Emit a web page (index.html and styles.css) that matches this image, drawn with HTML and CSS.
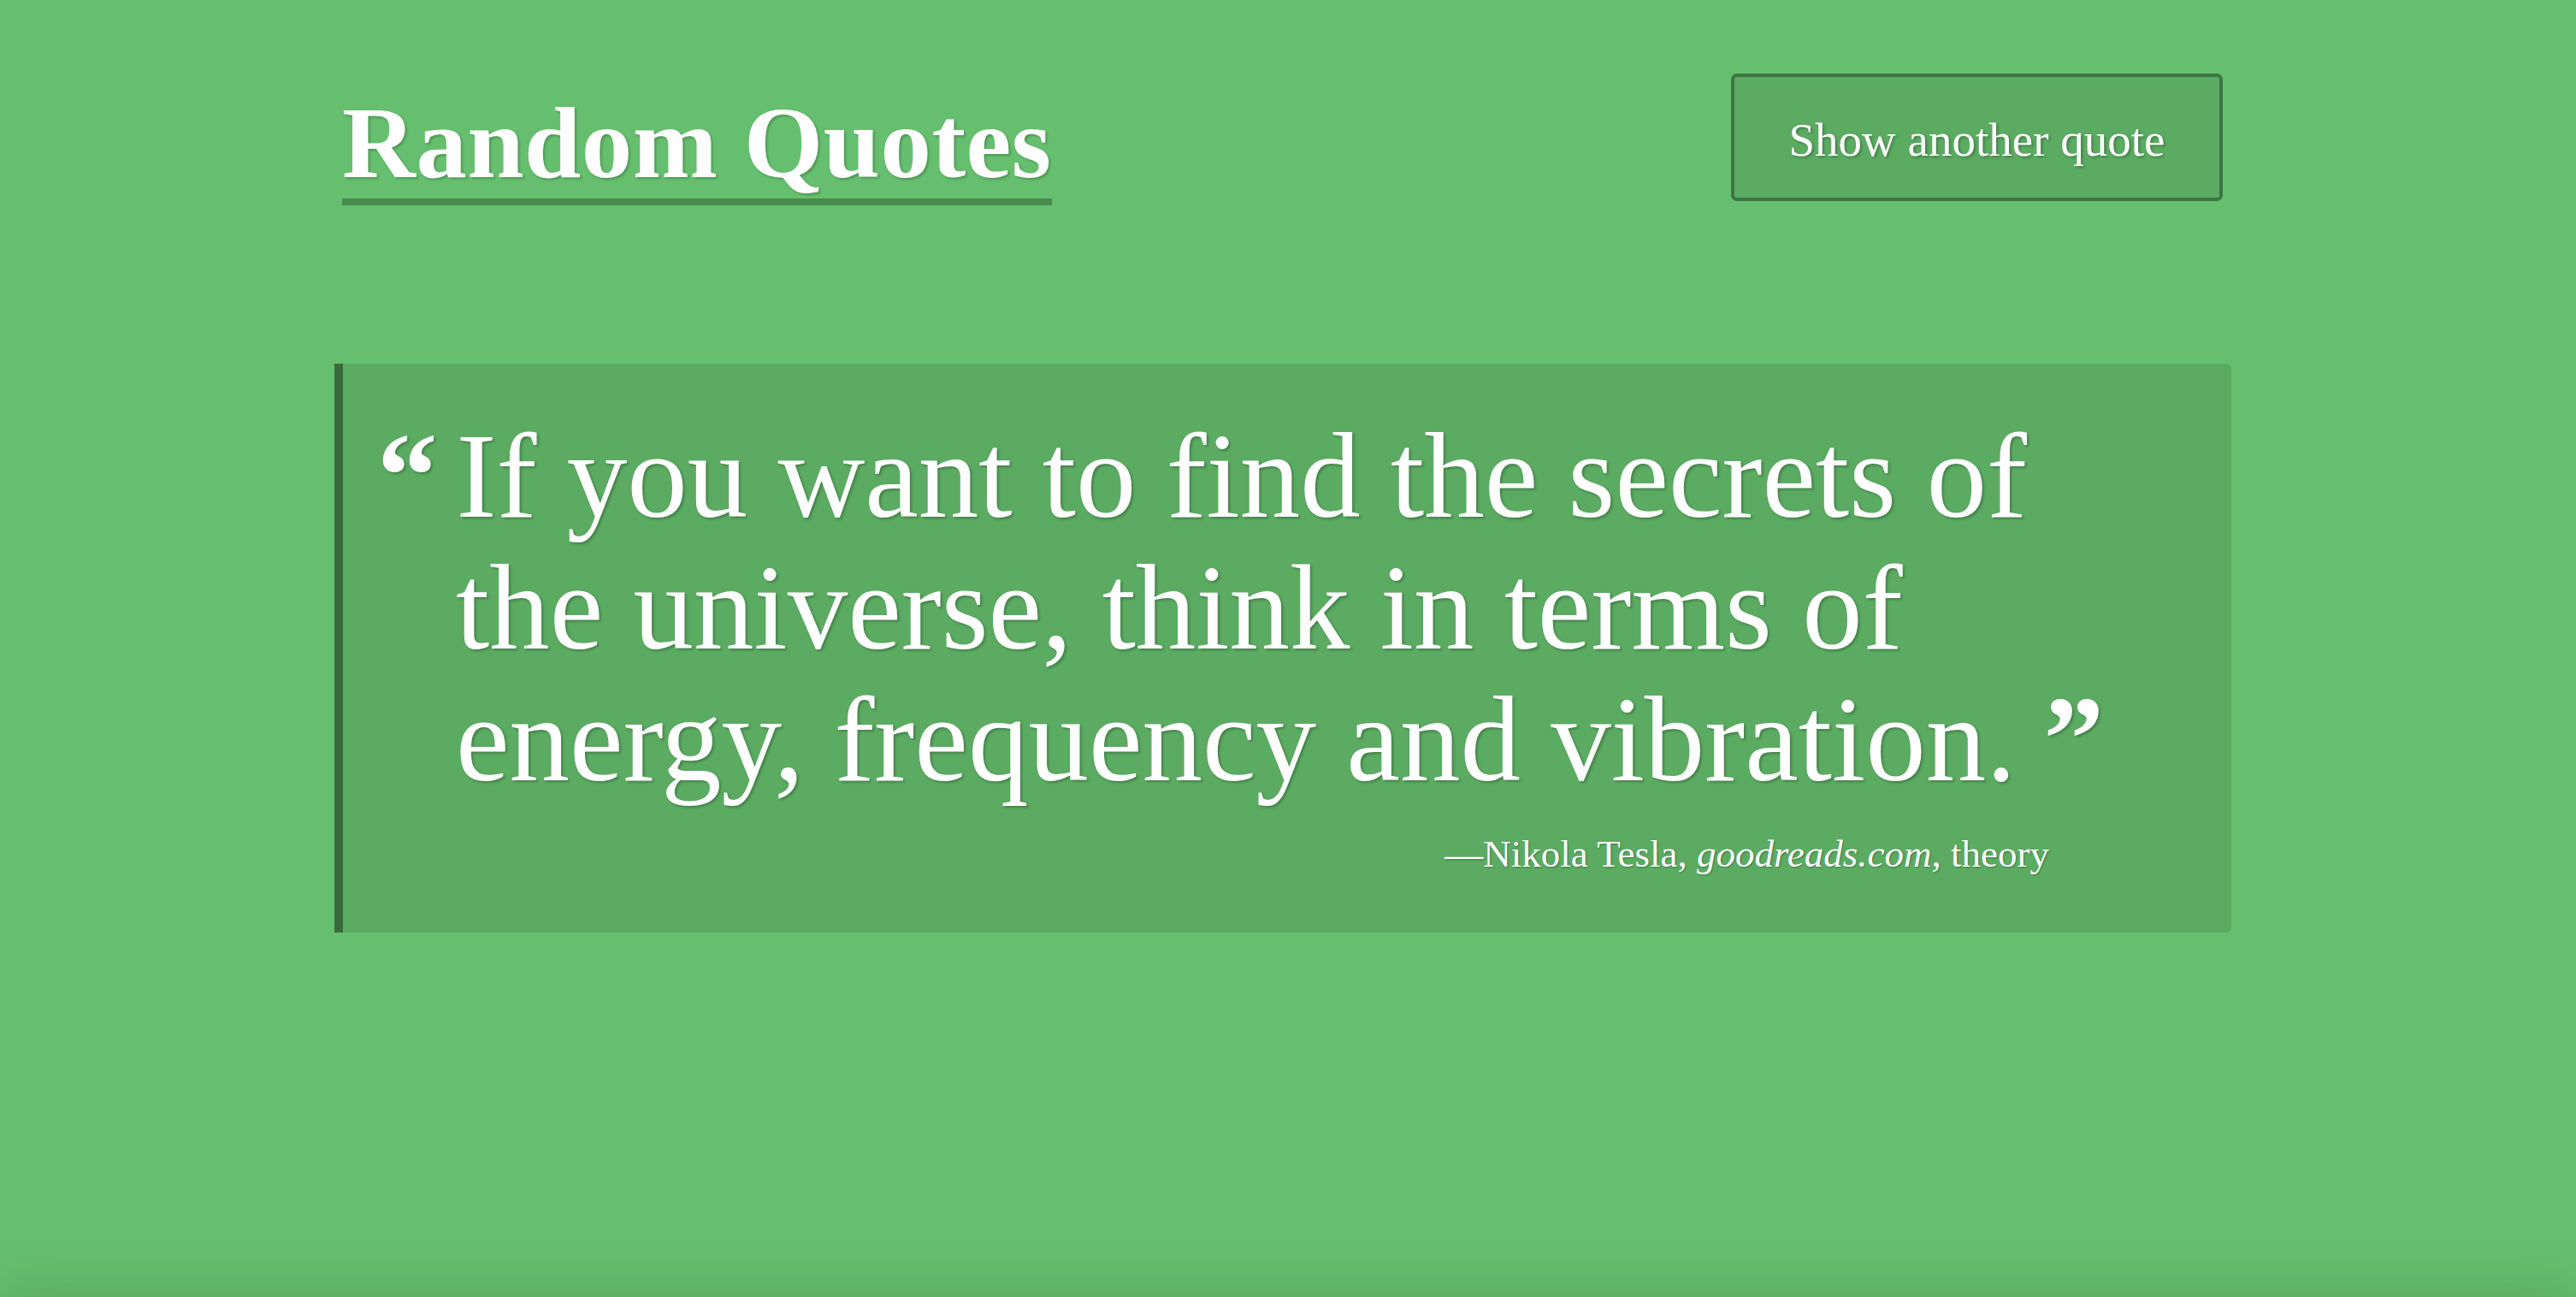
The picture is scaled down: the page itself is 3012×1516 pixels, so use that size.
FILE: index.html
```html
<!DOCTYPE html>
<html lang="en">
<head>
<meta charset="utf-8">
<title>Random Quotes</title>
<link rel="stylesheet" href="styles.css">
</head>
<body>
<div class="page">
  <header class="header">
    <h1 class="title">Random Quotes</h1>
    <button class="next-btn" type="button">Show another quote</button>
  </header>
  <blockquote class="quote">
    <p class="quote-text"><span class="mark mark-open">“</span>If you want to find the secrets of the universe, think in terms of energy, frequency and vibration.<span class="mark mark-close">”</span></p>
    <footer class="attribution">—Nikola Tesla, <cite>goodreads.com</cite>, theory</footer>
  </blockquote>
</div>
</body>
</html>
```
FILE: styles.css
```css
html, body {
  margin: 0;
  padding: 0;
  overflow: hidden;
}

body {
  background: #66bf6e;
  color: #ffffff;
  font-family: "Liberation Serif", "Times New Roman", serif;
  min-height: 100vh;
}

body::after {
  content: "";
  position: fixed;
  left: 0;
  right: 0;
  bottom: -100px;
  height: 100px;
  box-shadow: 0 0 70px rgba(0, 0, 0, 0.17);
}

.page {
  box-sizing: border-box;
  padding: 0 403px 0 391px;
}

.header {
  display: flex;
  justify-content: space-between;
  align-items: flex-start;
  padding: 86px 10px 0 9px;
}

.title {
  display: inline-block;
  margin: 16px 0 0;
  font-size: 119px;
  line-height: 130px;
  font-weight: 700;
  letter-spacing: 0.5px;
  border-bottom: 8px solid rgba(0, 0, 0, 0.28);
  text-shadow: 2px 2px 3px rgba(0, 0, 0, 0.22);
}

.next-btn {
  box-sizing: border-box;
  width: 575px;
  height: 149px;
  padding: 6px 0 0;
  background: rgba(0, 0, 0, 0.1);
  border: 4px solid rgba(0, 0, 0, 0.32);
  border-radius: 7px;
  color: #ffffff;
  font-family: "Liberation Serif", "Times New Roman", serif;
  font-size: 55px;
  line-height: 63px;
  text-shadow: 2px 2px 3px rgba(0, 0, 0, 0.25);
  cursor: pointer;
}

.quote {
  margin: 185px 0 0;
  padding: 54px 100px 65px 40px;
  background: rgba(0, 0, 0, 0.1);
  border-left: 10px solid rgba(0, 0, 0, 0.38);
  border-radius: 0 6px 6px 0;
}

.quote-text {
  margin: 0;
  padding-left: 92px;
  text-indent: -92px;
  font-size: 141px;
  line-height: 154px;
  font-weight: 400;
  text-shadow: 2px 2px 3px rgba(0, 0, 0, 0.25);
}

.mark {
  font-weight: 700;
}

.mark-open {
  margin-right: 22px;
}

.mark-close {
  margin-left: 32px;
}

.attribution {
  margin: 30px 113px 0 0;
  text-align: right;
  font-size: 45px;
  line-height: 54px;
  text-shadow: 1px 1px 2px rgba(0, 0, 0, 0.3);
}

.attribution cite {
  font-style: italic;
}
```
